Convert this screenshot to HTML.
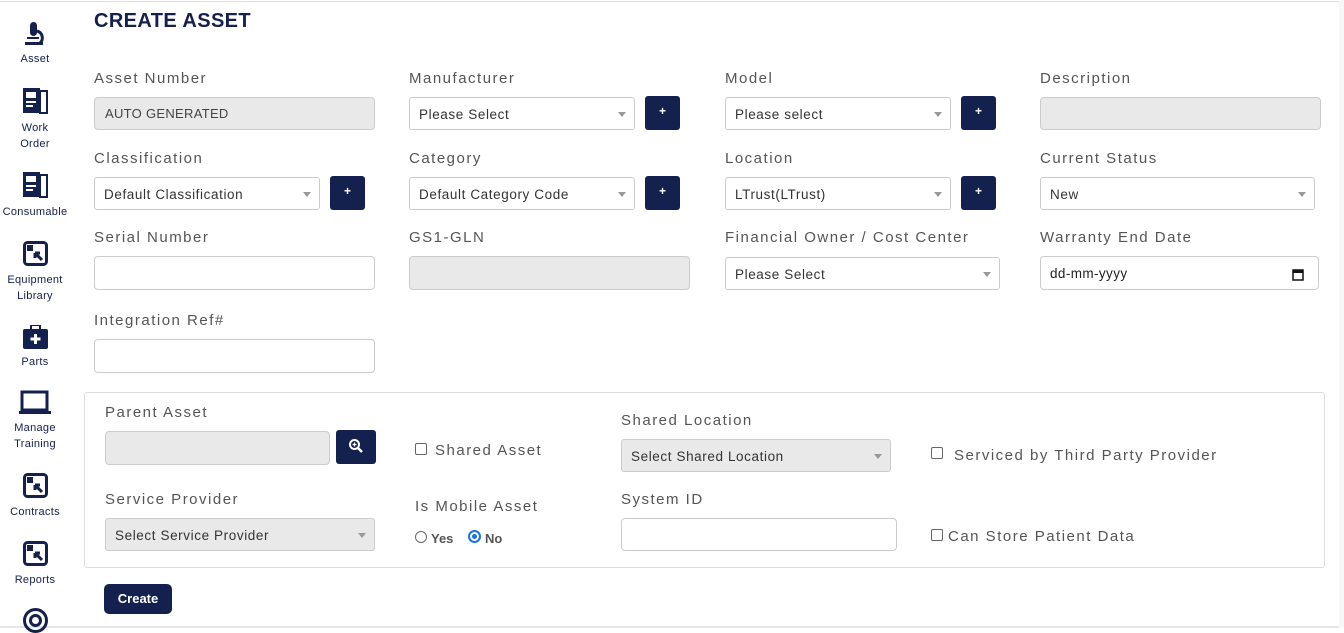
<!DOCTYPE html>
<html><head><meta charset="utf-8"><style>
*{box-sizing:border-box;margin:0;padding:0}
body{width:1344px;height:628px;background:#fff;font-family:"Liberation Sans",sans-serif;position:relative;overflow:hidden}
.a{position:absolute}
.lb{position:absolute;font-size:15px;color:#555;letter-spacing:1.5px;white-space:nowrap}
.in{position:absolute;border:1px solid #ccc;border-radius:4px;background:#fff;height:34px}
.sel{position:absolute;border:1px solid #ccc;border-radius:3px;background:#fff;height:33px;font-size:13.5px;color:#333;padding:9px 0 0 9px;letter-spacing:.6px;white-space:nowrap}
.sel:after{content:"";position:absolute;right:8px;top:14px;border:4px solid transparent;border-top:5px solid #999}
.g{background:#e9e9e9 !important}
.pb{position:absolute;width:35px;height:34px;background:#14204d;border-radius:3px;color:#fff;font-size:12px;font-weight:bold;text-align:center;line-height:30px}
.sl{position:absolute;width:70px;text-align:center;font-size:11px;color:#14204d;line-height:16px;letter-spacing:.3px}
.ic{position:absolute;left:23px}
.cb{position:absolute;width:12px;height:12px;border:1px solid #666;border-radius:2px;background:#fff}
</style></head><body>
<div class="a" style="left:0;top:1px;width:1344px;height:1px;background:#ddd"></div>
<div class="a" style="left:0;top:626px;width:1344px;height:2px;background:#e3e6ea"></div>
<div class="a" style="left:1339px;top:0;width:5px;height:628px;background:#f7f7f7"></div>

<!-- sidebar -->
<svg class="ic" style="top:22px" width="25" height="26" viewBox="0 0 25 26"><rect x="7" y="0" width="7" height="14" rx="3.5" fill="#14204d"/><path d="M14 9 a7 7 0 0 1 3 12" stroke="#14204d" stroke-width="3" fill="none"/><rect x="2" y="20" width="18" height="3" fill="#14204d"/><rect x="4" y="15" width="12" height="2" fill="#14204d"/></svg>
<div class="sl" style="top:51px">Asset</div>
<svg class="ic" style="top:88px" width="25" height="26" viewBox="0 0 25 26"><rect x="0" y="0" width="17" height="25" fill="#14204d"/><rect x="17" y="3" width="7" height="22" fill="none" stroke="#14204d" stroke-width="2"/><rect x="3" y="4" width="10" height="6" fill="#fff"/><rect x="3" y="13" width="10" height="2" fill="#fff"/><rect x="3" y="17" width="7" height="2" fill="#fff"/></svg>
<div class="sl" style="top:120px">Work<br>Order</div>
<svg class="ic" style="top:172px" width="25" height="26" viewBox="0 0 25 26"><rect x="0" y="0" width="17" height="25" fill="#14204d"/><rect x="17" y="3" width="7" height="22" fill="none" stroke="#14204d" stroke-width="2"/><rect x="3" y="4" width="10" height="6" fill="#fff"/><rect x="3" y="13" width="10" height="2" fill="#fff"/><rect x="3" y="17" width="7" height="2" fill="#fff"/></svg>
<div class="sl" style="top:204px">Consumable</div>
<svg class="ic" style="top:241px" width="25" height="25" viewBox="0 0 25 25"><rect x="1.5" y="1.5" width="22" height="22" rx="3" fill="none" stroke="#14204d" stroke-width="3"/><rect x="4" y="4" width="6" height="6" fill="#14204d"/><path d="M12 12 l7 7 M12 12 h5 M12 12 v5" stroke="#14204d" stroke-width="3"/></svg>
<div class="sl" style="top:272px">Equipment<br>Library</div>
<svg class="ic" style="top:325px" width="25" height="25" viewBox="0 0 25 25"><rect x="8" y="0" width="9" height="5" rx="1" fill="none" stroke="#14204d" stroke-width="2"/><rect x="0" y="4" width="25" height="20" rx="2" fill="#14204d"/><path d="M12.5 9v10M7.5 14h10" stroke="#fff" stroke-width="3"/></svg>
<div class="sl" style="top:354px">Parts</div>
<svg class="ic" style="top:390px;left:19px" width="32" height="26" viewBox="0 0 32 26"><rect x="3" y="2" width="25" height="18" fill="none" stroke="#14204d" stroke-width="3"/><rect x="0" y="21" width="32" height="3" fill="#14204d"/></svg>
<div class="sl" style="top:420px">Manage<br>Training</div>
<svg class="ic" style="top:473px" width="25" height="25" viewBox="0 0 25 25"><rect x="1.5" y="1.5" width="22" height="22" rx="3" fill="none" stroke="#14204d" stroke-width="3"/><rect x="4" y="4" width="6" height="6" fill="#14204d"/><path d="M12 12 l7 7 M12 12 h5 M12 12 v5" stroke="#14204d" stroke-width="3"/></svg>
<div class="sl" style="top:504px">Contracts</div>
<svg class="ic" style="top:541px" width="25" height="25" viewBox="0 0 25 25"><rect x="1.5" y="1.5" width="22" height="22" rx="3" fill="none" stroke="#14204d" stroke-width="3"/><rect x="4" y="4" width="6" height="6" fill="#14204d"/><path d="M12 12 l7 7 M12 12 h5 M12 12 v5" stroke="#14204d" stroke-width="3"/></svg>
<div class="sl" style="top:572px">Reports</div>
<svg class="ic" style="top:608px" width="25" height="25" viewBox="0 0 25 25"><circle cx="12.5" cy="12.5" r="11" fill="none" stroke="#14204d" stroke-width="3"/><circle cx="12.5" cy="12.5" r="5" fill="none" stroke="#14204d" stroke-width="3"/></svg>

<div class="a" style="left:94px;top:10px;font-size:20px;font-weight:bold;color:#14204d;letter-spacing:.4px">CREATE ASSET</div>

<!-- row1 -->
<div class="lb" style="left:94px;top:70px">Asset Number</div>
<div class="in g" style="left:94px;top:97px;width:281px;height:33px;font-size:13px;color:#444;padding:8px 0 0 10px;letter-spacing:.3px">AUTO GENERATED</div>
<div class="lb" style="left:409px;top:70px">Manufacturer</div>
<div class="sel" style="left:409px;top:97px;width:226px">Please Select</div>
<div class="pb" style="left:645px;top:96px">+</div>
<div class="lb" style="left:725px;top:70px">Model</div>
<div class="sel" style="left:725px;top:97px;width:226px">Please select</div>
<div class="pb" style="left:961px;top:96px">+</div>
<div class="lb" style="left:1040px;top:70px">Description</div>
<div class="in g" style="left:1040px;top:97px;width:281px;height:33px"></div>

<!-- row2 -->
<div class="lb" style="left:94px;top:150px">Classification</div>
<div class="sel" style="left:94px;top:177px;width:226px">Default Classification</div>
<div class="pb" style="left:330px;top:176px">+</div>
<div class="lb" style="left:409px;top:150px">Category</div>
<div class="sel" style="left:409px;top:177px;width:226px">Default Category Code</div>
<div class="pb" style="left:645px;top:176px">+</div>
<div class="lb" style="left:725px;top:150px">Location</div>
<div class="sel" style="left:725px;top:177px;width:226px">LTrust(LTrust)</div>
<div class="pb" style="left:961px;top:176px">+</div>
<div class="lb" style="left:1040px;top:150px">Current Status</div>
<div class="sel" style="left:1040px;top:177px;width:275px">New</div>

<!-- row3 -->
<div class="lb" style="left:94px;top:229px">Serial Number</div>
<div class="in" style="left:94px;top:256px;width:281px"></div>
<div class="lb" style="left:409px;top:229px">GS1-GLN</div>
<div class="in g" style="left:409px;top:256px;width:281px"></div>
<div class="lb" style="left:725px;top:229px">Financial Owner / Cost Center</div>
<div class="sel" style="left:725px;top:257px;width:275px">Please Select</div>
<div class="lb" style="left:1040px;top:229px">Warranty End Date</div>
<div class="in" style="left:1040px;top:256px;width:279px;font-size:13.5px;color:#222;padding:9px 0 0 9px;letter-spacing:.4px">dd-mm-yyyy
<svg class="a" style="right:14px;top:11px" width="12" height="13" viewBox="0 0 12 13"><rect x="1" y="2" width="10" height="10" fill="none" stroke="#111" stroke-width="1.5"/><rect x="1" y="2" width="10" height="3" fill="#111"/></svg></div>

<div class="lb" style="left:94px;top:312px">Integration Ref#</div>
<div class="in" style="left:94px;top:339px;width:281px"></div>

<!-- box -->
<div class="a" style="left:84px;top:392px;width:1241px;height:176px;border:1px solid #dcdde2;border-radius:3px"></div>
<div class="lb" style="left:105px;top:404px">Parent Asset</div>
<div class="in g" style="left:105px;top:431px;width:225px"></div>
<div class="pb" style="left:336px;top:430px;width:40px"><svg style="margin-top:9px" width="14" height="14" viewBox="0 0 14 14"><circle cx="5.5" cy="5.5" r="4.5" fill="none" stroke="#fff" stroke-width="2"/><path d="M9 9l4 4" stroke="#fff" stroke-width="2.5"/><path d="M5.5 3.5v4M3.5 5.5h4" stroke="#fff" stroke-width="1.3"/></svg></div>
<div class="cb" style="left:415px;top:443px"></div>
<div class="lb" style="left:435px;top:442px">Shared Asset</div>
<div class="lb" style="left:621px;top:412px">Shared Location</div>
<div class="sel g" style="left:621px;top:439px;width:270px">Select Shared Location</div>
<div class="cb" style="left:931px;top:447px"></div>
<div class="lb" style="left:954px;top:447px">Serviced by Third Party Provider</div>
<div class="lb" style="left:105px;top:491px">Service Provider</div>
<div class="sel g" style="left:105px;top:518px;width:270px">Select Service Provider</div>
<div class="lb" style="left:415px;top:498px">Is Mobile Asset</div>
<div class="a" style="left:415px;top:531px;width:12px;height:12px;border:1px solid #666;border-radius:50%"></div>
<div class="a" style="left:431px;top:531px;font-size:13px;color:#555;font-weight:bold">Yes</div>
<div class="a" style="left:468px;top:530px;width:13px;height:13px;border:2px solid #1a73e8;border-radius:50%;padding:2px"><div style="width:5px;height:5px;background:#1a73e8;border-radius:50%"></div></div>
<div class="a" style="left:485px;top:531px;font-size:13px;color:#555;font-weight:bold">No</div>
<div class="lb" style="left:621px;top:491px">System ID</div>
<div class="in" style="left:621px;top:518px;width:276px;height:33px"></div>
<div class="cb" style="left:931px;top:529px"></div>
<div class="lb" style="left:948px;top:528px">Can Store Patient Data</div>

<div class="a" style="left:104px;top:584px;width:68px;height:30px;background:#14204d;border-radius:5px;color:#fff;font-size:13px;font-weight:bold;text-align:center;line-height:30px">Create</div>
</body></html>
